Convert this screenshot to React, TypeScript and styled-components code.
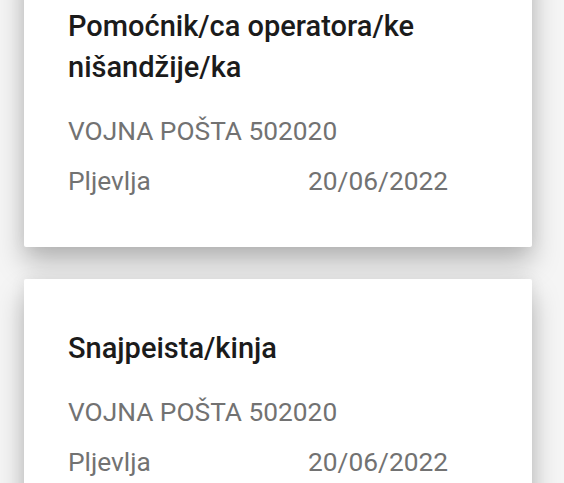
import React from "react";
import styled, { createGlobalStyle } from "styled-components";

const Global = createGlobalStyle`
  html, body {
    margin: 0;
    padding: 0;
    background: #f5f5f5;
    overflow: hidden;
  }
  body {
    font-family: Roboto, "Noto Sans", "Liberation Sans", sans-serif;
  }
`;

const List = styled.div`
  display: flex;
  flex-direction: column;
  gap: 32px;
  margin-top: -43px;
  padding: 0 32px 0 24px;
`;

const Card = styled.article`
  background: #ffffff;
  border-radius: 2px;
  padding: 49px 84px 48px 44px;
  box-shadow: 0 16px 28px rgba(0, 0, 0, 0.25), 0 0 16px rgba(0, 0, 0, 0.07);
`;

const Title = styled.h2`
  margin: 0;
  font-size: 29px;
  line-height: 41px;
  font-weight: 500;
  color: #1b1b1b;
`;

const Unit = styled.div`
  margin-top: 25px;
  font-size: 26.3px;
  line-height: 36px;
  color: #727272;
`;

const Meta = styled.div`
  margin-top: 14px;
  display: flex;
  justify-content: space-between;
  font-size: 26.3px;
  line-height: 36px;
  color: #727272;
`;

const jobs = [
  { title: "Pomoćnik/ca operatora/ke nišandžije/ka", unit: "VOJNA POŠTA 502020", city: "Pljevlja", date: "20/06/2022" },
  { title: "Snajpeista/kinja", unit: "VOJNA POŠTA 502020", city: "Pljevlja", date: "20/06/2022" },
];

export default function App() {
  return (
    <>
      <Global />
      <List>
        {jobs.map((j) => (
          <Card key={j.title}>
            <Title>{j.title}</Title>
            <Unit>{j.unit}</Unit>
            <Meta>
              <span>{j.city}</span>
              <span>{j.date}</span>
            </Meta>
          </Card>
        ))}
      </List>
    </>
  );
}
